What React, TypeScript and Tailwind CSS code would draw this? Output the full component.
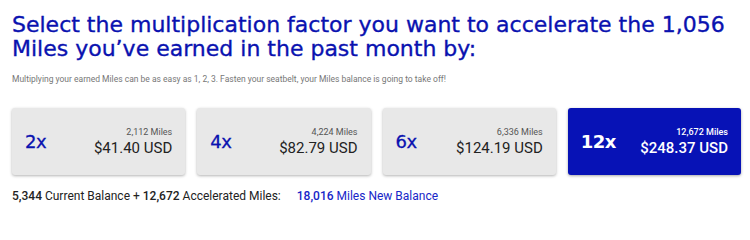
const options = [
  { factor: "2x", miles: "2,112 Miles", price: "$41.40 USD", selected: false },
  { factor: "4x", miles: "4,224 Miles", price: "$82.79 USD", selected: false },
  { factor: "6x", miles: "6,336 Miles", price: "$124.19 USD", selected: false },
  { factor: "12x", miles: "12,672 Miles", price: "$248.37 USD", selected: true },
];

function FactorCard({
  factor,
  miles,
  price,
  selected,
}: {
  factor: string;
  miles: string;
  price: string;
  selected: boolean;
}) {
  return (
    <button
      className={
        selected
          ? "flex h-[67px] items-center justify-between rounded-[3px] bg-[#0712b6] pl-[13px] pr-[13px] text-white shadow-[0_1px_3px_rgba(0,0,0,0.35)]"
          : "flex h-[67px] items-center justify-between rounded-[3px] bg-[#e8e8e8] pl-[13px] pr-[13px] text-[#222] shadow-[0_1px_3px_rgba(0,0,0,0.3)]"
      }
    >
      <span
        className={
          selected
            ? "font-['DejaVu_Sans',sans-serif] text-[18px] font-bold leading-none tracking-[-0.5px]"
            : "font-['DejaVu_Sans',sans-serif] text-[18px] leading-none tracking-[-0.5px] text-[#0a12b0] [-webkit-text-stroke:0.3px_#0a12b0]"
        }
      >
        {factor}
      </span>
      <span className="flex flex-col items-end font-['Roboto',sans-serif]">
        <span
          className={
            selected
              ? "text-[9px] font-medium leading-[12px] text-white"
              : "text-[9px] leading-[12px] text-[#555]"
          }
        >
          {miles}
        </span>
        <span
          className={
            selected
              ? "text-[15px] font-medium leading-[20px]"
              : "text-[15px] leading-[20px]"
          }
        >
          {price}
        </span>
      </span>
    </button>
  );
}

export default function App() {
  return (
    <div className="h-[215px] w-[750px] overflow-hidden bg-white pl-[12px] pr-[9px] pt-[13px]">
      <h1 className="font-['DejaVu_Sans',sans-serif] text-[22px] leading-[24px] text-[#0a12b0] [-webkit-text-stroke:0.35px_#0a12b0]">
        Select the multiplication factor you want to accelerate the 1,056
        Miles you’ve earned in the past month by:
      </h1>
      <p className="mt-[13px] font-['Roboto',sans-serif] text-[8.5px] leading-[10px] text-[#777]">
        Multiplying your earned Miles can be as easy as 1, 2, 3. Fasten your
        seatbelt, your Miles balance is going to take off!
      </p>
      <div className="mt-[24px] grid grid-cols-4 gap-[12px]">
        {options.map((o) => (
          <FactorCard key={o.factor} {...o} />
        ))}
      </div>
      <div className="mt-[13px] flex items-center font-['Roboto',sans-serif] text-[12px] leading-[16px] text-[#222]">
        <span>
          <span className="font-medium">5,344</span> Current Balance +{" "}
          <span className="font-medium">12,672</span> Accelerated Miles:
        </span>
        <span className="ml-[16px] text-[#1726c8]">
          <span className="font-medium">18,016</span> Miles New Balance
        </span>
      </div>
    </div>
  );
}
